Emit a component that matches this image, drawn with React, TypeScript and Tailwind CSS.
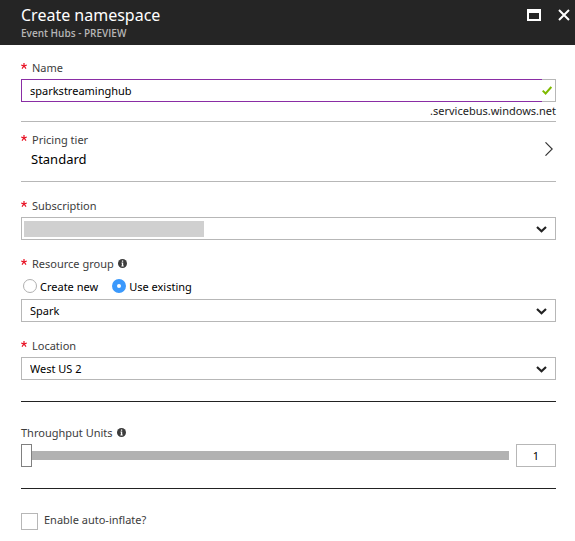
import { useState } from "react";
import type { ReactNode } from "react";

function Required() {
  return (
    <svg aria-hidden="true" className="mr-[5px] h-4 w-[6px] shrink-0 text-[#e81123]" viewBox="0 0 6 16" fill="none" stroke="currentColor" strokeWidth="1.2">
      <path d="M3 3v3M0.2 5l2.8 1 2.8-1M1 8.6L3 6l2 2.6" />
    </svg>
  );
}

function InfoIcon() {
  return (
    <svg aria-hidden="true" className="mb-px ml-1 size-[9px] shrink-0" viewBox="0 0 9 9">
      <circle cx="4.5" cy="4.5" r="4.5" fill="#3c3c3c" />
      <path d="M3.9 1.5h1.3v1.2H3.9zM3.5 3.6h1.7v3h.5v.8H3.4v-.8h.5V4.4h-.4z" fill="#fff" />
    </svg>
  );
}

function FieldLabel({ htmlFor, required = true, info, children }: { htmlFor: string; required?: boolean; info?: boolean; children: ReactNode }) {
  return (
    <label htmlFor={htmlFor} className="mb-[3px] flex h-4 items-center text-[#3c3c3c]">
      {required && <Required />}
      {children}
      {info && <InfoIcon />}
    </label>
  );
}

function SelectBox({ id, value, redacted }: { id: string; value: string; redacted?: boolean }) {
  return (
    <div className="relative">
      <select id={id} className="block h-[23px] w-full appearance-none border border-[#b7b7b7] bg-white pr-6 pl-2 text-black outline-none">
        <option>{value}</option>
      </select>
      {redacted && <span className="pointer-events-none absolute top-1 left-[3px] h-4 w-[180px] bg-[#d0d0d0]" />}
      <svg aria-hidden="true" className="pointer-events-none absolute top-[9px] right-[9px] h-[7px] w-[11px]" viewBox="0 0 11 7" fill="none" stroke="#222" strokeWidth="2.2">
        <path d="M1 1l4.5 4.2L10 1" />
      </svg>
    </div>
  );
}

function RadioOption({ label, checked, onChange }: { label: string; checked: boolean; onChange: () => void }) {
  return (
    <label className="flex items-center gap-[3px] text-black">
      <input
        type="radio"
        name="group-mode"
        checked={checked}
        onChange={onChange}
        className="mb-[3px] size-[14px] appearance-none rounded-full border border-[#b0b0b0] bg-white checked:border-[5px] checked:border-[#3b99fc]"
      />
      {label}
    </label>
  );
}

export default function App() {
  const [name, setName] = useState("sparkstreaminghub");
  const [existing, setExisting] = useState(true);
  const [units, setUnits] = useState("1");

  return (
    <div className="bg-white font-['Noto_Sans',sans-serif] text-[11px] leading-4">
      <header className="flex h-[45px] justify-between bg-[#252525] pt-[5px] pr-[5px] pl-[21px]">
        <div>
          <h1 className="text-base leading-[21px] text-white">Create namespace</h1>
          <p className="font-['Open_Sans',sans-serif] text-[10px] leading-[14px] font-semibold text-[#b5b5b5]">Event Hubs - PREVIEW</p>
        </div>
        <div className="flex h-5 items-center gap-[17px]">
          <button type="button" aria-label="Maximize">
            <svg className="block h-3 w-[14px]" viewBox="0 0 14 12" fill="#fff">
              <path fillRule="evenodd" d="M0 0h14v12H0zM2 4v6h10V4z" />
            </svg>
          </button>
          <button type="button" aria-label="Close">
            <svg className="block size-3" viewBox="0 0 12 12" fill="none" stroke="#fff" strokeWidth="2">
              <path d="M1 1l10 10M11 1L1 11" />
            </svg>
          </button>
        </div>
      </header>

      <main className="pt-[15px] pr-[19px] pb-[11px] pl-[21px]">
        <section className="border-b border-[#b7b7b7]">
          <FieldLabel htmlFor="name">Name</FieldLabel>
          <div className="flex h-[23px]">
            <input
              id="name"
              value={name}
              onChange={(e) => setName(e.target.value)}
              className="min-w-0 flex-1 border border-r-0 border-[#8a2da5] px-2 text-black outline-none"
            />
            <span className="flex w-[14px] items-center border border-l-0 border-[#b7b7b7]">
              <svg aria-hidden="true" className="h-[9px] w-[10px]" viewBox="0 0 10 9" fill="none" stroke="#7fba00" strokeWidth="2">
                <path d="M0.7 4.6l2.9 2.9L9.3 1" />
              </svg>
            </span>
          </div>
          <p className="pt-px pb-[2px] text-right text-[#222]">.servicebus.windows.net</p>
        </section>

        <button type="button" className="flex w-full items-start justify-between border-b border-[#b7b7b7] pt-[10px] pb-3 text-left">
          <span>
            <span className="flex h-4 items-center text-[#3c3c3c]">
              <Required />
              Pricing tier
            </span>
            <span className="block pt-px pl-[10px] text-[13px] leading-5 text-black">Standard</span>
          </span>
          <svg aria-hidden="true" className="mt-[10px] mr-[3px] h-[14px] w-2" viewBox="0 0 8 14" fill="none" stroke="#333" strokeWidth="1.1">
            <path d="M0.5 0.3L7.2 7 0.5 13.7" />
          </svg>
        </button>

        <section className="pt-4">
          <FieldLabel htmlFor="subscription">Subscription</FieldLabel>
          <SelectBox id="subscription" value="" redacted />
        </section>

        <section className="pt-4">
          <FieldLabel htmlFor="group" info>Resource group</FieldLabel>
          <div className="flex h-6 items-center gap-[14px] pl-[2px]">
            <RadioOption label="Create new" checked={!existing} onChange={() => setExisting(false)} />
            <RadioOption label="Use existing" checked={existing} onChange={() => setExisting(true)} />
          </div>
          <SelectBox id="group" value="Spark" />
        </section>

        <section className="border-b border-[#222] pt-4 pb-[21px]">
          <FieldLabel htmlFor="location">Location</FieldLabel>
          <SelectBox id="location" value="West US 2" />
        </section>

        <section className="border-b border-[#222] pt-[23px] pb-[21px]">
          <FieldLabel htmlFor="units" required={false} info>Throughput Units</FieldLabel>
          <div className="flex h-[23px] gap-[7px]">
            <input
              id="units"
              type="range"
              min="1"
              max="20"
              value={units}
              onChange={(e) => setUnits(e.target.value)}
              className="h-[23px] min-w-0 flex-1 appearance-none bg-transparent [&::-webkit-slider-runnable-track]:h-[9px] [&::-webkit-slider-runnable-track]:bg-[#b2b2b2] [&::-webkit-slider-thumb]:-mt-[7px] [&::-webkit-slider-thumb]:h-[23px] [&::-webkit-slider-thumb]:w-[11px] [&::-webkit-slider-thumb]:appearance-none [&::-webkit-slider-thumb]:border [&::-webkit-slider-thumb]:border-[#808080] [&::-webkit-slider-thumb]:bg-white"
            />
            <input
              aria-label="Throughput units value"
              value={units}
              onChange={(e) => setUnits(e.target.value)}
              className="w-10 border border-[#b7b7b7] text-center text-black outline-none"
            />
          </div>
        </section>

        <label className="flex gap-[6px] pt-6 text-[#3c3c3c]">
          <input type="checkbox" className="size-[17px] appearance-none border border-[#b7b7b7] bg-white checked:bg-[#3b99fc]" />
          <span className="-mt-px">Enable auto-inflate?</span>
        </label>
      </main>
    </div>
  );
}
